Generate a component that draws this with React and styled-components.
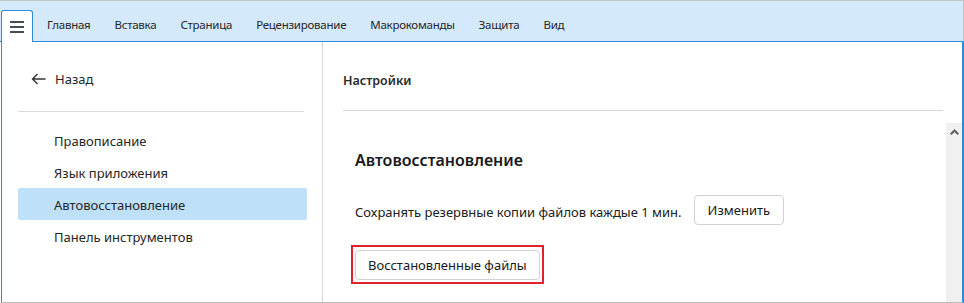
import React from 'react';
import styled, { createGlobalStyle } from 'styled-components';

const GlobalStyle = createGlobalStyle`
  html, body {
    margin: 0;
    padding: 0;
    background: #ffffff;
  }
  body {
    font-family: 'Noto Sans', 'Open Sans', sans-serif;
    color: #202020;
  }
  * {
    box-sizing: border-box;
  }
`;

const tabs = [
  'Главная',
  'Вставка',
  'Страница',
  'Рецензирование',
  'Макрокоманды',
  'Защита',
  'Вид',
];

const sections = [
  'Правописание',
  'Язык приложения',
  'Автовосстановление',
  'Панель инструментов',
];

const MenuIcon = () => (
  <svg width="14" height="12" viewBox="0 0 14 12">
    <rect x="0" y="0" width="14" height="2" fill="#444e58" />
    <rect x="0" y="5" width="14" height="2" fill="#444e58" />
    <rect x="0" y="10" width="14" height="2" fill="#444e58" />
  </svg>
);

const BackArrow = () => (
  <svg width="15" height="12" viewBox="0 0 15 12">
    <path
      d="M14.5 6H1.5M6.5 1L1.5 6L6.5 11"
      fill="none"
      stroke="#333"
      strokeWidth="1.4"
    />
  </svg>
);

const UpChevron = () => (
  <svg width="9" height="6" viewBox="0 0 9 6">
    <path d="M0 4.5L4.5 0L9 4.5L7.5 6L4.5 3L1.5 6Z" fill="#606060" />
  </svg>
);

const App = () => {
  const active = 'Автовосстановление';
  return (
    <>
      <GlobalStyle />
      <Window>
        <TopBar>
          <MenuButton>
            <MenuIcon />
          </MenuButton>
          <Tabs>
            {tabs.map(t => (
              <Tab key={t}>{t}</Tab>
            ))}
          </Tabs>
        </TopBar>
        <Body>
          <Sidebar>
            <BackRow>
              <BackArrow />
              <span>Назад</span>
            </BackRow>
            <SideDivider />
            <NavList>
              {sections.map(s => (
                <NavItem key={s} active={s === active}>
                  {s}
                </NavItem>
              ))}
            </NavList>
          </Sidebar>
          <Main>
            <MainHeader>
              <MainTitle>Настройки</MainTitle>
            </MainHeader>
            <ScrollArea>
              <Content>
                <SectionTitle>Автовосстановление</SectionTitle>
                <OptionRow>
                  <OptionText>
                    Сохранять резервные копии файлов каждые 1 мин.
                  </OptionText>
                  <Button>Изменить</Button>
                </OptionRow>
                <Marked>
                  <Button wide>Восстановленные файлы</Button>
                </Marked>
              </Content>
              <Scrollbar>
                <ScrollArrow>
                  <UpChevron />
                </ScrollArrow>
              </Scrollbar>
            </ScrollArea>
          </Main>
        </Body>
      </Window>
    </>
  );
};

export default App;

const Window = styled.div`
  width: 964px;
  height: 303px;
  display: flex;
  flex-direction: column;
  border-top: 1px solid #c3c3c3;
  overflow: hidden;
`;

const TopBar = styled.div`
  height: 41px;
  flex-shrink: 0;
  display: flex;
  align-items: flex-end;
  background: #d4e9fb;
  border-bottom: 1px solid #2c8ad6;
  border-right: 1px solid #c3c3c3;
  padding-left: 1px;
`;

const MenuButton = styled.div`
  width: 32px;
  height: 32px;
  display: flex;
  align-items: center;
  justify-content: center;
  background: #ffffff;
  border: 1px solid #2c8ad6;
  border-bottom: none;
  border-radius: 3px 3px 0 0;
  margin-bottom: -1px;
`;

const Tabs = styled.div`
  display: flex;
  height: 34px;
  align-items: center;
  padding-left: 2px;
`;

const Tab = styled.div`
  padding: 0 12px;
  font-size: 11.5px;
  letter-spacing: -0.25px;
  color: #262626;
  white-space: nowrap;
`;

const Body = styled.div`
  flex: 1;
  display: flex;
  min-height: 0;
  margin-left: 1px;
  border-left: 1px solid #2c8ad6;
  border-right: 2px solid #2c8ad6;
  border-bottom: 1px solid #bdbdbd;
`;

const Sidebar = styled.div`
  width: 321px;
  flex-shrink: 0;
  border-right: 1px solid #d6d6d6;
  padding: 16px 15px 0 16px;
`;

const BackRow = styled.div`
  height: 42px;
  display: flex;
  align-items: center;
  gap: 9px;
  padding-left: 13px;
  font-size: 13px;
  color: #262626;
`;

const SideDivider = styled.div`
  height: 1px;
  background: #dcdcdc;
  margin: 11px 3px 12px 0;
`;

const NavList = styled.div`
  display: flex;
  flex-direction: column;
`;

const NavItem = styled.div`
  height: 32px;
  display: flex;
  align-items: center;
  padding-left: 36px;
  padding-top: 1px;
  font-size: 13px;
  color: #262626;
  border-radius: 2px;
  background: ${p => (p.active ? '#bee0f8' : 'transparent')};
`;

const Main = styled.div`
  flex: 1;
  display: flex;
  flex-direction: column;
  min-width: 0;
`;

const MainHeader = styled.div`
  height: 69px;
  flex-shrink: 0;
  margin: 0 19px 0 20px;
  padding-top: 8px;
  display: flex;
  align-items: center;
  border-bottom: 1px solid #d8d8d8;
`;

const MainTitle = styled.div`
  font-size: 12.5px;
  font-weight: 600;
  color: #2a2a2a;
`;

const ScrollArea = styled.div`
  flex: 1;
  display: flex;
  margin-top: 12px;
  min-height: 0;
`;

const Content = styled.div`
  flex: 1;
  padding: 26px 0 0 32px;
  display: flex;
  flex-direction: column;
  align-items: flex-start;
`;

const SectionTitle = styled.div`
  font-size: 16px;
  line-height: 22px;
  font-weight: 600;
  color: #1a1a1a;
`;

const OptionRow = styled.div`
  display: flex;
  align-items: center;
  gap: 12px;
  margin-top: 24px;
`;

const OptionText = styled.div`
  font-size: 13px;
  color: #202020;
  padding-top: 3px;
`;

const Button = styled.div`
  height: 30px;
  padding: 0 ${p => (p.wide ? '12px' : '13px')};
  display: flex;
  align-items: center;
  justify-content: center;
  font-size: 13px;
  color: #1a1a1a;
  background: #ffffff;
  border: 1px solid #d2d2d2;
  border-radius: 4px;
  white-space: nowrap;
`;

const Marked = styled.div`
  margin-top: 20px;
  margin-left: -4px;
  padding: 3px 2px 2px;
  border: 2px solid #e3212b;
`;

const Scrollbar = styled.div`
  width: 16px;
  flex-shrink: 0;
  background: #f0f0f0;
  display: flex;
  flex-direction: column;
  align-items: center;
`;

const ScrollArrow = styled.div`
  height: 18px;
  display: flex;
  align-items: center;
  justify-content: center;
`;
